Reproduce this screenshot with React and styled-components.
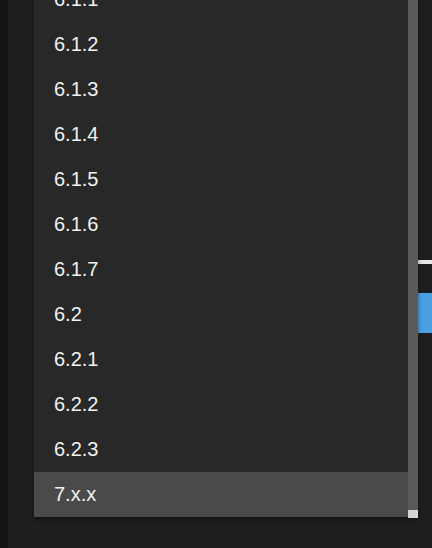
import React, { useLayoutEffect, useRef } from "react";
import styled, { createGlobalStyle } from "styled-components";

const Global = createGlobalStyle`
  html, body { margin: 0; padding: 0; height: 100%; background: #1e1e1e; overflow: hidden; }
  body { font-family: "Liberation Sans", Arial, sans-serif; }
  #root { height: 100%; }
`;

const Page = styled.div`
  position: relative;
  display: flex;
  width: 432px;
  height: 548px;
  overflow: hidden;
  background: #1e1e1e;
`;

const Sidebar = styled.div`
  width: 8px;
  flex: none;
  background: #141414;
`;

const Main = styled.div`
  flex: 1;
  display: flex;
  flex-direction: column;
  align-items: flex-end;
  padding-top: 260px;
  background: #1e1e1e;
`;

const Rule = styled.div`
  width: 200px;
  height: 4px;
  background: #e6e6e6;
`;

const PrimaryButton = styled.div`
  margin-top: 29px;
  width: 160px;
  height: 40px;
  background: #4a9fe3;
`;

const Menu = styled.div`
  position: absolute;
  left: 34px;
  top: 0;
  width: 384px;
  height: 517px;
  display: flex;
  background: #282828;
  box-shadow: 0 2px 4px rgba(0, 0, 0, 0.45);
`;

const List = styled.ul`
  flex: 1;
  margin: 0;
  padding: 0;
  list-style: none;
  overflow-y: auto;
  scrollbar-width: none;
  &::-webkit-scrollbar { display: none; }
`;

const Item = styled.li`
  height: 45px;
  display: flex;
  align-items: center;
  padding-left: 20px;
  font-size: 20px;
  color: #f2f2f2;
  background: ${(p) => (p.$active ? "#4a4a4a" : "transparent")};
`;

const Track = styled.div`
  width: 10px;
  flex: none;
  display: flex;
  flex-direction: column;
  justify-content: flex-end;
  background: #5a5a5a;
`;

const Thumb = styled.div`
  height: 8px;
  margin-bottom: -1px;
  background: #d4d4d4;
`;

const versions = [
  "1.x", "2.x", "3.x", "4.x",
  "5.0", "5.0.1", "5.1", "5.1.1", "5.2", "5.2.1",
  "6.0", "6.0.1", "6.0.2", "6.0.3",
  "6.1", "6.1.1", "6.1.2", "6.1.3", "6.1.4", "6.1.5", "6.1.6", "6.1.7",
  "6.2", "6.2.1", "6.2.2", "6.2.3", "7.x.x",
];

export default function App() {
  const listRef = useRef(null);
  useLayoutEffect(() => {
    if (listRef.current) listRef.current.scrollTop = listRef.current.scrollHeight;
  }, []);
  return (
    <>
      <Global />
      <Page>
        <Sidebar />
        <Main>
          <Rule />
          <PrimaryButton />
        </Main>
        <Menu>
          <List ref={listRef}>
            {versions.map((v) => (
              <Item key={v} $active={v === "7.x.x"}>{v}</Item>
            ))}
          </List>
          <Track>
            <Thumb />
          </Track>
        </Menu>
      </Page>
    </>
  );
}
